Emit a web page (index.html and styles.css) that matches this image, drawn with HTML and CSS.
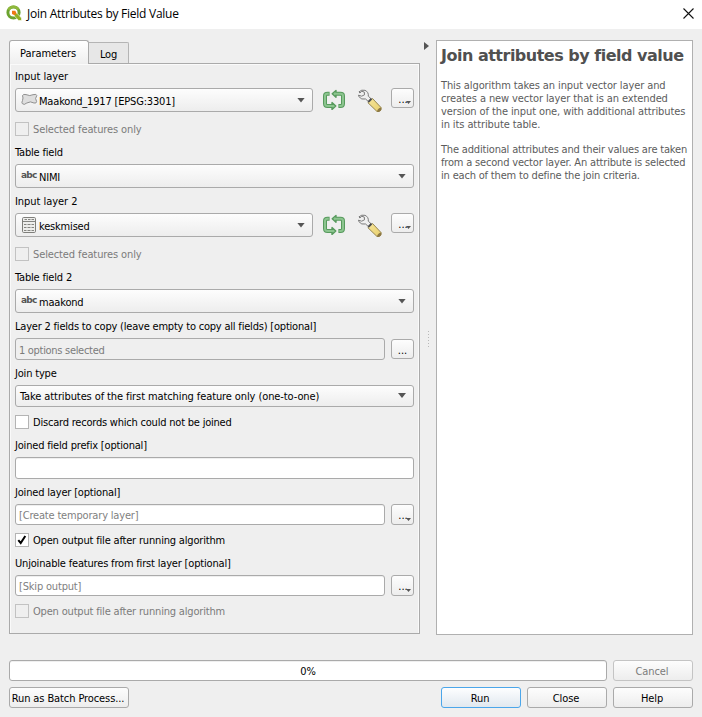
FILE: index.html
```html
<!DOCTYPE html>
<html lang="en">
<head>
<meta charset="utf-8">
<title>Join Attributes by Field Value</title>
<link rel="stylesheet" href="styles.css">
</head>
<body>
<svg class="defs" width="0" height="0">
  <defs>
    <linearGradient id="handle" x1="0" y1="0" x2="1" y2="1"><stop offset="0" stop-color="#f6e59b"/><stop offset="1" stop-color="#e8cf6c"/></linearGradient>
    <symbol id="iterate" viewBox="0 0 24 22">
      <g fill="none" stroke-linejoin="round">
        <path d="M7.600 4.800H5.500Q3 4.800 3 7V14.500Q3 17 5.500 17H11M16.400 17H18.500Q21 17 21 14.500V7Q21 4.800 18.500 4.800H13" stroke="#579a5d" stroke-width="4"/>
        <path d="M14 1.400V8.200L10.200 4.800ZM10 13.600V20.400L13.800 17Z" fill="#8cc58f" stroke="#579a5d" stroke-width="1.400"/>
        <path d="M6.800 4.800H5.500Q3 4.800 3 7V14.500Q3 17 5.500 17H12M17.200 17H18.500Q21 17 21 14.500V7Q21 4.800 18.500 4.800H12" stroke="#8cc58f" stroke-width="2"/>
      </g>
    </symbol>
    <symbol id="wrench" viewBox="0 0 26 24">
      <path d="M12.500 11.500L15.500 9.500L24 18.500Q25 21 22 22.500L20 22.500L11 13.800Z" fill="url(#handle)" stroke="#8b7a45" stroke-width=".9"/>
      <path d="M20 22.400Q20.500 19.500 24 18.500Q25.300 21.500 22 22.800Z" fill="#8d7843"/>
      <path d="M2 2.800Q4.500 .4 8 1.300Q11.800 3 11.300 7.200L14.800 10.400L12 13.200L8.600 10Q4.300 11 1.900 7.700L1.400 6.200L4.700 7.200L7.500 5.800L7.300 3.100L4.800 2.200L2.900 4Z" fill="#f0f0f0" stroke="#7b7b7b" stroke-width="1"/>
      <path d="M12 13.400L15.100 10.300L13.800 9.100L10.700 12.200Z" fill="#494949"/>
    </symbol>
    <symbol id="polygon" viewBox="0 0 17 13">
      <path d="M1.500 2.500Q2.500 .8 5 1.600Q9 3.500 12 1.700Q15.800 .7 15.800 2.500Q13.500 5.500 15.600 8.500Q15.600 10.600 13 10Q9.500 7.800 5.800 10Q3 12.500 1.300 10.600Q.4 9.500 1.500 7.500Q2.500 5 1.500 2.500Z" fill="#dedede" stroke="#909090"/>
    </symbol>
    <symbol id="table" viewBox="0 0 14 16">
      <rect x=".5" y=".5" width="13" height="15" rx="1.200" fill="#eeeeec" stroke="#7f7f7b"/>
      <path d="M1 4.500H13M2.500 2.500H5M6 2.500H8.500M9.500 2.500H12M2 7.500H4.500M5.500 7.500H8.500M9.500 7.500H12M2 10.500H4.500M5.500 10.500H8.500M9.500 10.500H12M2 13.500H4.500M5.500 13.500H8.500M9.500 13.500H12" stroke="#858581" fill="none"/>
    </symbol>
  </defs>
</svg>
<div class="window">
  <header class="titlebar">
    <svg class="logo" width="16" height="16" viewBox="0 0 16 16">
      <circle cx="7.500" cy="7.500" r="5.600" fill="none" stroke="#6ba32f" stroke-width="3"/>
      <path d="M2.500 4.800A5.600 5.600 0 0 1 12.300 4.600" fill="none" stroke="#8fb83b" stroke-width="2.600"/>
      <path d="M8.300 8.300L11 8.300L15.500 13V15.500H12.600L8.300 11Z" fill="#93b023" stroke="#fff" stroke-width=".6"/>
      <path d="M6 5.800H9.300L10.600 8.500L8.500 10.200L6 9Z" fill="#ee7913"/>
    </svg>
    <h1 class="window-title">Join Attributes by Field Value</h1>
    <svg class="close" width="11" height="11" viewBox="0 0 11 11"><path d="M.5 .5L10.500 10.500M10.500 .5L.5 10.500" stroke="#111" stroke-width="1.100"/></svg>
  </header>
  <main class="body">
    <section class="left">
      <nav class="tabs">
        <div class="tab active">Parameters</div>
        <div class="tab">Log</div>
      </nav>
      <div class="pane">
        <div class="label short-label">Input layer</div>
        <div class="row tall">
          <div class="combo tall"><svg class="ic-poly" width="17" height="13"><use href="#polygon"/></svg><span>Maakond_1917 [EPSG:3301]</span><i class="arrow"></i></div>
          <svg class="iterate" width="24" height="22"><use href="#iterate"/></svg>
          <svg class="wrench" width="26" height="24"><use href="#wrench"/></svg>
          <div class="more menu short"><span>...</span><i class="arrow small"></i></div>
        </div>
        <div class="check disabled wide"><i class="box"></i><span>Selected features only</span></div>
        <div class="label">Table field</div>
        <div class="combo tall"><b class="abc">abc</b><span>NIMI</span><i class="arrow"></i></div>
        <div class="label short-label">Input layer 2</div>
        <div class="row tall">
          <div class="combo tall"><svg class="ic-table" width="14" height="16"><use href="#table"/></svg><span>keskmised</span><i class="arrow"></i></div>
          <svg class="iterate" width="24" height="22"><use href="#iterate"/></svg>
          <svg class="wrench" width="26" height="24"><use href="#wrench"/></svg>
          <div class="more menu short"><span>...</span><i class="arrow small"></i></div>
        </div>
        <div class="check disabled wide"><i class="box"></i><span>Selected features only</span></div>
        <div class="label">Table field 2</div>
        <div class="combo tall"><b class="abc">abc</b><span>maakond</span><i class="arrow"></i></div>
        <div class="label copy">Layer 2 fields to copy (leave empty to copy all fields) [optional]</div>
        <div class="row">
          <div class="edit disabled">1 options selected</div>
          <div class="more plain"><span>...</span></div>
        </div>
        <div class="label">Join type</div>
        <div class="combo"><span class="join">Take attributes of the first matching feature only (one-to-one)</span><i class="arrow"></i></div>
        <div class="check"><i class="box"></i><span class="discard">Discard records which could not be joined</span></div>
        <div class="label">Joined field prefix [optional]</div>
        <div class="edit"></div>
        <div class="label">Joined layer [optional]</div>
        <div class="row output-row">
          <div class="edit output">[Create temporary layer]</div>
          <div class="more menu"><span>...</span><i class="arrow small"></i></div>
        </div>
        <div class="check"><i class="box"><svg width="12" height="12" viewBox="0 0 12 12"><path d="M2.300 6.200L4.700 9L9.300 2" fill="none" stroke="#000" stroke-width="2"/></svg></i><span>Open output file after running algorithm</span></div>
        <div class="label">Unjoinable features from first layer [optional]</div>
        <div class="row output-row">
          <div class="edit output">[Skip output]</div>
          <div class="more menu"><span>...</span><i class="arrow small"></i></div>
        </div>
        <div class="check disabled"><i class="box"></i><span>Open output file after running algorithm</span></div>
      </div>
    </section>
    <div class="splitter"><i class="collapse"></i><i class="grip"></i></div>
    <aside class="help">
      <h2>Join attributes by field value</h2>
      <p>This algorithm takes an input vector layer and<br>creates a new vector layer that is an extended<br>version of the input one, with additional attributes<br>in its attribute table.</p>
      <p>The additional attributes and their values are taken<br>from a second vector layer. An attribute is selected<br>in each of them to define the join criteria.</p>
    </aside>
  </main>
  <footer class="footer">
    <div class="line">
      <div class="progress">0%</div>
      <div class="button disabled">Cancel</div>
    </div>
    <div class="line">
      <div class="button batch">Run as Batch Process...</div>
      <div class="spacer"></div>
      <div class="button primary">Run</div>
      <div class="button">Close</div>
      <div class="button">Help</div>
    </div>
  </footer>
</div>
</body>
</html>
```
FILE: styles.css
```css
* { box-sizing: border-box; }
body { margin: 0; background: #efefef; overflow: hidden; }
.defs { position: absolute; }
.window {
  width: 702px; height: 717px;
  display: flex; flex-direction: column;
  background: #efefef; color: #000;
  font: 11px/16px "DejaVu Sans Condensed", "DejaVu Sans", Tahoma, sans-serif;
  font-stretch: condensed;
  letter-spacing: -.18px;
  white-space: nowrap;
}
.titlebar { height: 29px; background: #fff; display: flex; align-items: center; padding: 0 8px 3px 6px; }
.logo { flex: none; }
.window-title { margin: 0 auto 0 5px; padding-top: 2px; font: 400 12px/16px "Open Sans", sans-serif; letter-spacing: -.26px; }
.body { display: flex; padding: 11px 9px 0; height: 606px; }
.left { width: 411px; height: 594px; display: flex; flex-direction: column; }
.tabs { display: flex; align-items: flex-end; height: 23px; }
.tab { width: 40px; height: 21px; border: 1px solid #b4b4b4; border-bottom: 0; border-left: 0; border-radius: 0 2px 0 0; background: #e7e7e7; text-align: center; line-height: 23px; }
.tab.active { width: 80px; height: 24px; margin-bottom: -1px; border: 1px solid #aaa; border-bottom: 0; border-radius: 3px 3px 0 0; background: linear-gradient(#fff, #efefef); line-height: 25px; padding-right: 2px; z-index: 1; letter-spacing: -.05px; }
.pane { flex: 1; border: 1px solid #aaa; box-shadow: inset 1px 1px #fafafa, inset -1px 0 #fafafa; padding: 4px 5px; }
.label { height: 16px; margin: 5px 0 4px; line-height: 17px; }
.short-label { letter-spacing: -.05px; }
.label.copy { letter-spacing: -.2px; }
.pane > .label:first-child { margin-top: 0; }
.check + .label { margin-top: 8px; }
.row { display: flex; height: 22px; }
.row.tall { height: 24px; }
.output-row { height: 21px; }
.combo, .edit, .more, .button, .progress { border: 1px solid #aaa; border-radius: 3px; }
.combo { flex: 1; display: flex; align-items: center; height: 22px; padding: 2px 7px 0 4px; background: linear-gradient(#fdfdfd, #ededed); }
.combo.tall { height: 24px; padding: 3px 7px 0 5px; }
.row .combo { flex: none; width: 298px; }
.join { letter-spacing: -.1px; }
.arrow { width: 8px; height: 5px; margin: -3px 0 0 auto; background: #555; clip-path: polygon(0 0, 100% 0, 50% 100%); }
.ic-poly { margin: -4px 1px 0 0; }
.ic-table { margin: -3px 3px 0 1px; }
.abc { width: 18px; font: 700 9px/12px "DejaVu Sans", sans-serif; letter-spacing: -.7px; color: #555; margin-top: -5px; }
.iterate { flex: none; margin: 1px 0 0 9px; }
.wrench { flex: none; margin: 1px 0 0 11px; }
.row .more { margin-left: auto; }
.more { width: 23px; background: linear-gradient(#fdfdfd, #ededed); display: flex; justify-content: center; }
.more span { line-height: 22px; letter-spacing: 0; }
.more.plain { height: 20px; margin-top: 1px; }
.more.menu { position: relative; padding-left: 1px; }
.more.short { height: 20px; }
.arrow.small { position: absolute; right: 2px; bottom: 3px; width: 5px; height: 3px; margin: 0; }
.check { display: flex; align-items: center; height: 14px; margin-top: 8px; }
.check.wide { margin-top: 10px; }
.check span { margin: 2px 0 0 4px; }
.check.wide span { letter-spacing: -.11px; }
.check .discard { letter-spacing: -.21px; }
.box { width: 14px; height: 14px; border: 1px solid #b4b4b4; background: #fff; }
.box svg { display: block; }
.disabled { color: #7b7b7b; }
.disabled .box { background: #efefef; border-color: #c2c2c2; }
.edit { height: 22px; background: #fff; padding: 2px 0 0 3px; box-shadow: inset 0 1px #efefef; }
.row .edit { width: 370px; }
.edit.disabled { background: #efefef; padding-top: 4px; letter-spacing: -.3px; }
.edit.output { height: 21px; padding-top: 3px; color: #7f7f7f; }
.splitter { width: 16px; position: relative; }
.collapse { position: absolute; left: 4px; top: 2px; width: 5px; height: 8px; background: #555; clip-path: polygon(0 0, 100% 50%, 0 100%); }
.grip { position: absolute; left: 8px; top: 291px; width: 1px; height: 17px; background: repeating-linear-gradient(#b8b8b8 0 1px, transparent 1px 3px); }
.help { width: 257px; height: 595px; background: #fff; border: 1px solid #b0b0b0; padding: 4px; color: #5c5c5c; }
.help h2 { margin: 0; font: 700 16px/22px "DejaVu Sans", sans-serif; font-stretch: normal; letter-spacing: -.5px; color: #505050; }
.help p { margin: 0 0 12px; line-height: 13px; }
.help h2 + p { margin-top: 12px; letter-spacing: -.1px; }
.footer { padding: 25px 9px 0; display: flex; flex-direction: column; gap: 6px; }
.line { display: flex; gap: 6px; }
.progress { flex: 1; height: 21px; background: #fff; text-align: center; line-height: 21px; box-shadow: inset 0 1px #efefef; }
.button { width: 80px; height: 21px; background: linear-gradient(#fdfdfd, #ededed); text-align: center; line-height: 21px; letter-spacing: -.1px; padding-right: 2px; }
.button.disabled { border-color: #c4c4c4; }
.button.batch { width: 120px; }
.button.primary { border-color: #4ba6ea; background: linear-gradient(#fdfeff, #e1e8ef); }
.spacer { flex: 1; }
```
